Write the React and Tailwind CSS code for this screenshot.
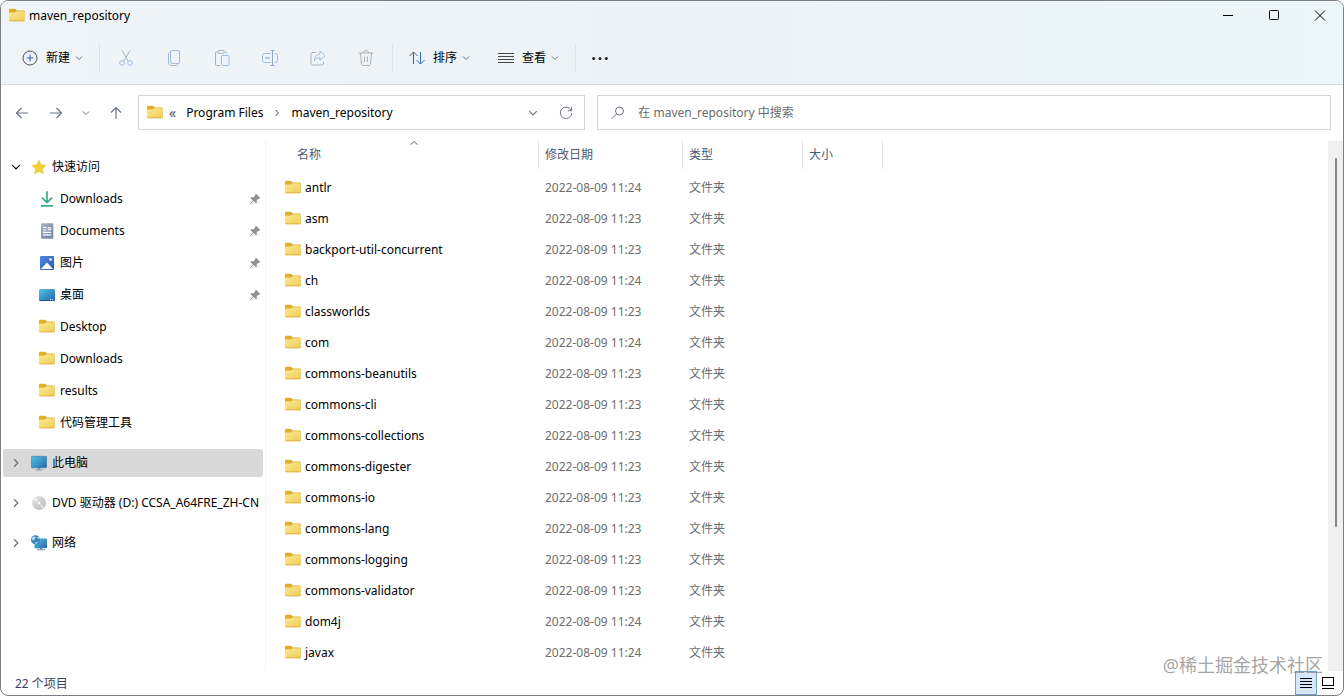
const font = 'font-["Noto_Sans","Noto_Sans_CJK_SC",sans-serif]'

const quickItems = [
  { name: 'Downloads', Icon: DownloadIcon, pinned: true },
  { name: 'Documents', Icon: DocumentIcon, pinned: true },
  { name: '图片', Icon: PictureIcon, pinned: true },
  { name: '桌面', Icon: DesktopIcon, pinned: true },
  { name: 'Desktop', Icon: FolderIcon },
  { name: 'Downloads', Icon: FolderIcon },
  { name: 'results', Icon: FolderIcon },
  { name: '代码管理工具', Icon: FolderIcon },
]

const files = [
  ['antlr', '11:24'],
  ['asm', '11:23'],
  ['backport-util-concurrent', '11:23'],
  ['ch', '11:24'],
  ['classworlds', '11:23'],
  ['com', '11:24'],
  ['commons-beanutils', '11:23'],
  ['commons-cli', '11:23'],
  ['commons-collections', '11:23'],
  ['commons-digester', '11:23'],
  ['commons-io', '11:23'],
  ['commons-lang', '11:23'],
  ['commons-logging', '11:23'],
  ['commons-validator', '11:23'],
  ['dom4j', '11:24'],
  ['javax', '11:24'],
]

// Gradients shared by every icon on the page
const IconDefs = () => (
  <svg width="0" height="0" className="absolute" aria-hidden>
    <defs>
      <linearGradient id="folder" x1="0" y1="0" x2="1" y2="1">
        <stop offset="0" stopColor="#fbe79a" />
        <stop offset="1" stopColor="#efce52" />
      </linearGradient>
      <linearGradient id="screen" x1="0" y1="0" x2="1" y2="1">
        <stop offset="0" stopColor="#55c3dc" />
        <stop offset="1" stopColor="#2467b4" />
      </linearGradient>
      <linearGradient id="paper" x1="0" y1="0" x2="1" y2="1">
        <stop offset="0" stopColor="#a9b4c8" />
        <stop offset="1" stopColor="#6d7f9c" />
      </linearGradient>
      <linearGradient id="photo" x1="0" y1="0" x2="1" y2="1">
        <stop offset="0" stopColor="#4f87d8" />
        <stop offset="1" stopColor="#2a5fbd" />
      </linearGradient>
      <linearGradient id="disc" x1="0" y1="0" x2="1" y2="1">
        <stop offset="0" stopColor="#e9e9e9" />
        <stop offset="1" stopColor="#b5b7b8" />
      </linearGradient>
    </defs>
  </svg>
)

const Svg = ({ size = 16, className = '', children, ...rest }) => (
  <svg
    width={size}
    height={size}
    viewBox={`0 0 ${size} ${size}`}
    fill="none"
    className={`shrink-0 ${className}`}
    aria-hidden
    {...rest}
  >
    {children}
  </svg>
)

function FolderIcon() {
  return (
    <Svg>
      <path d="M0 2a1.300 1.300 0 0 1 1.300-1.300h4.200c.5 0 .9.200 1.200.5L8 2.500h6.700A1.300 1.300 0 0 1 16 3.800V6H0z" fill="#e0ae2c" />
      <path d="M0 5.300c0-.5.400-.9.900-.9h4.700c.4 0 .8-.1 1.100-.4l.9-.8h7.200c.7 0 1.200.5 1.200 1.200v7.700c0 .7-.5 1.200-1.200 1.200H1.200c-.7 0-1.200-.5-1.200-1.200z" fill="url(#folder)" />
      <path d="M.3 12.800h15.400" stroke="#d9a93a" strokeWidth=".8" />
    </Svg>
  )
}

function DownloadIcon() {
  return (
    <Svg stroke="#3fa987" strokeWidth="1.700">
      <path d="M8 .3v11M3 6.600l5 5 5-5M2 14.900h12" />
    </Svg>
  )
}

function DocumentIcon() {
  return (
    <Svg>
      <rect x="2" y=".3" width="12.300" height="15.500" rx="1" fill="url(#paper)" />
      <path d="M4 4.500h3.500M4 7h3.500M4 9.400h8.300M4 11.800h8.300" stroke="#fff" strokeWidth="1.200" />
      <path d="M9.200 4.700h2.600v2.200H9.200z" stroke="#fff" strokeWidth="1" />
    </Svg>
  )
}

function PictureIcon() {
  return (
    <Svg>
      <rect x="1" y="1" width="14" height="14" rx="1" fill="url(#photo)" />
      <path d="M2 14l5.300-5.800c.4-.4 1-.4 1.400 0L14 14z" fill="#fff" />
      <circle cx="11.500" cy="4.500" r="1.300" fill="#fff" />
    </Svg>
  )
}

function DesktopIcon() {
  return (
    <Svg>
      <rect y="2" width="16" height="12" rx="1.300" fill="url(#screen)" />
      <path d="M.5 13.500h15" stroke="#1d5187" />
      <path d="M11 12.800h1M13 12.800h1" stroke="#fff" />
    </Svg>
  )
}

function ComputerIcon() {
  return (
    <Svg>
      <path d="M6.700 12h2.600v2.500H6.700z" fill="#7f97a8" />
      <path d="M4.500 15h7" stroke="#8699a6" />
      <rect x=".3" y="1.300" width="15.400" height="11.500" rx="1" fill="url(#screen)" stroke="#2e6f9f" strokeWidth=".5" />
    </Svg>
  )
}

function DiscIcon() {
  return (
    <Svg>
      <circle cx="8" cy="8" r="7" fill="url(#disc)" />
      <path d="M8 8 4.500 2 2 4.500zM8 8l5.500 4-2 2z" fill="#fff" opacity=".5" />
      <circle cx="8" cy="8" r="1.800" fill="#f7f7f7" stroke="#c9c9c9" strokeWidth=".5" />
    </Svg>
  )
}

function NetworkIcon() {
  return (
    <Svg>
      <path d="M9 12.500h2v2H9zM6 14.300h8v1H6z" fill="#7896ab" />
      <rect x="3.500" y="3.500" width="12.500" height="9.700" rx=".8" fill="url(#screen)" />
      <circle cx="4.500" cy="4.800" r="4.500" fill="#3d84bd" />
      <path d="M.8 3.200C2 1.200 4 1 4.500 2.200S3 4.500 1.800 5.800zM6.500 1.500c-1 1.200.3 2.500 2.200 2.500-.2-1-1-2-2.200-2.500zM4 8.800c-.3-1.500 1.200-2.300 3.200-1.700C6.500 8.200 5.400 8.900 4 8.800z" fill="#b9dcee" />
    </Svg>
  )
}

function StarIcon() {
  return (
    <Svg>
      <path
        d="M8 1.300l2.100 4.500 4.900.6-3.600 3.400.9 4.900L8 12.300l-4.300 2.400.9-4.900L1 6.400l4.900-.6z"
        fill="#f3ce35"
        stroke="#eec12f"
        strokeWidth=".7"
        strokeLinejoin="round"
      />
    </Svg>
  )
}

const PinIcon = () => (
  <Svg size={12}>
    <path d="M7 .7l4.300 4.300-.9.700-.7-.1-2 2 .1 2.200-.8.700-2.400-2.400L1 11.400l-.5-.5L3.700 7.500 1.300 5l.7-.8 2.300.2 2-2-.1-.8z" fill="#8e9294" />
  </Svg>
)

const Chevron = ({ size = 8, dir = 'down', className = '' }) => (
  <svg
    width={size}
    height={size}
    viewBox="0 0 8 8"
    fill="none"
    stroke="currentColor"
    className={`shrink-0 ${className}`}
    aria-hidden
  >
    <path d={{ down: 'M1 2.500 4 5.500l3-3', up: 'M.7 5.700 4 2.300l3.300 3.400', right: 'M2.500 1 5.500 4l-3 3' }[dir]} />
  </svg>
)

const tools = [
  {
    label: '剪切',
    icon: (
      <>
        <path d="M4 .5l6.500 11M12 .5l-6.500 11" stroke="#a9b2ba" />
        <circle cx="4" cy="13" r="2.300" />
        <circle cx="12" cy="13" r="2.300" />
      </>
    ),
  },
  {
    label: '复制',
    icon: (
      <>
        <path d="M3.500 2.500c-.7.300-1 .8-1 1.500v8.500c0 1.700 1 3 2.700 3h5c.8 0 1.300-.3 1.600-1" stroke="#a9b7c6" />
        <rect x="4.500" y=".5" width="9" height="13" rx="1.500" />
      </>
    ),
  },
  {
    label: '粘贴',
    icon: (
      <>
        <path d="M6 15.500H2.500c-.6 0-1-.4-1-1V3c0-.6.400-1 1-1H4M10 2h1.500c.6 0 1 .4 1 1v.500" stroke="#a9b2ba" />
        <rect x="4" y=".5" width="6" height="2.800" rx="1" stroke="#a9b2ba" />
        <rect x="7.500" y="5.500" width="7.500" height="10" rx="1" />
      </>
    ),
  },
  {
    label: '重命名',
    icon: (
      <>
        <path d="M8.500 3.500h-6a2 2 0 0 0-2 2v5c0 1.100.9 2 2 2h6M12.500 3.500h1a2 2 0 0 1 2 2v5a2 2 0 0 1-2 2h-1" />
        <path d="M8.500.5h4M8.500 15.500h4M10.500.5v15" stroke="#8fa8c8" />
        <path d="M3 8h5" strokeWidth="1.400" />
      </>
    ),
  },
  {
    label: '共享',
    icon: (
      <>
        <path d="M6 2.500H3a2 2 0 0 0-2 2V13c0 1.100.9 2 2 2h8.500a2 2 0 0 0 2-2v-1.500" stroke="#a9b2ba" />
        <path d="M10 1l5 4.700-5 4.600V7.700c-2.500 0-4.300.8-5.700 3.100.2-3.700 2.200-6.700 5.700-7z" strokeLinejoin="round" />
      </>
    ),
  },
  {
    label: '删除',
    icon: (
      <g stroke="#a9b2ba">
        <path d="M.8 3h14.400M5.500 3c0-1.500 1-2.500 2.500-2.500s2.500 1 2.500 2.500M2.500 3l1 11c.1.900.7 1.500 1.500 1.500h6c.8 0 1.400-.6 1.500-1.500l1-11" />
        <path d="M6.500 6.500V12M9.500 6.500V12" />
      </g>
    ),
  },
]

const Divider = () => <span className="h-7 w-px bg-[#dde3e6]" />

const MenuButton = ({ icon, label, className = '' }) => (
  <button type="button" className={`flex items-center text-black ${className}`}>
    {icon}
    <span className="ml-2">{label}</span>
    <Chevron className="ml-[5px] text-gray-500" />
  </button>
)

const TitleBar = () => (
  <header className="flex h-[30px] items-center justify-between pl-2">
    <div className="flex items-center gap-1">
      <FolderIcon />
      <h1 className="text-black">maven_repository</h1>
    </div>
    <div className="flex h-full text-black">
      <button type="button" aria-label="最小化" className="flex w-[46px] items-center justify-center">
        <Svg size={12} stroke="currentColor"><path d="M1 5.500h10" /></Svg>
      </button>
      <button type="button" aria-label="最大化" className="flex w-[46px] items-center justify-center">
        <Svg size={12} stroke="currentColor"><rect x="1.500" y=".5" width="9" height="9" rx="1" /></Svg>
      </button>
      <button type="button" aria-label="关闭" className="flex w-[46px] items-center justify-center">
        <Svg size={12} stroke="currentColor"><path d="M1 .5l10 10M11 .5l-10 10" /></Svg>
      </button>
    </div>
  </header>
)

const Toolbar = () => (
  <div className="flex h-[53px] items-center pl-[21px]">
    <MenuButton
      label="新建"
      className="mr-4"
      icon={
        <Svg>
          <circle cx="8" cy="8" r="7" stroke="#4b5156" />
          <path d="M8 4.500v7M4.500 8h7" stroke="#3c63c8" />
        </Svg>
      }
    />
    <Divider />
    <div className="mx-4 flex gap-7">
      {tools.map(({ label, icon }) => (
        <button key={label} type="button" aria-label={label} disabled className="flex w-5 justify-center">
          <Svg stroke="#9dbbe0">{icon}</Svg>
        </button>
      ))}
    </div>
    <Divider />
    <MenuButton
      label="排序"
      className="ml-4"
      icon={
        <Svg>
          <path d="M4.500 14V2M.5 6l4-4 4 4" stroke="#555b60" />
          <path d="M11.500 2v12M7.500 10l4 4 4-4" stroke="#2f6cc9" />
        </Svg>
      }
    />
    <MenuButton
      label="查看"
      className="mr-4 ml-7"
      icon={<Svg stroke="#44494d"><path d="M0 3.500h16M0 6.500h16M0 9.500h16M0 12.500h16" /></Svg>}
    />
    <Divider />
    <button type="button" aria-label="更多" className="ml-4">
      <Svg fill="#222">
        <circle cx="1.700" cy="8.500" r="1.500" />
        <circle cx="8" cy="8.500" r="1.500" />
        <circle cx="14.300" cy="8.500" r="1.500" />
      </Svg>
    </button>
  </div>
)

const AddressRow = () => (
  <div className="flex h-[55px] shrink-0 items-center">
    <nav className="mr-3.5 flex items-center gap-[18px] pl-[13px] text-gray-500">
      <button type="button" aria-label="后退">
        <Svg stroke="currentColor" strokeWidth="1.200"><path d="M14 8H2.500M7.500 3l-5 5 5 5" /></Svg>
      </button>
      <button type="button" aria-label="前进">
        <Svg stroke="currentColor" strokeWidth="1.200"><path d="M2 8h11.500M8.500 3l5 5-5 5" /></Svg>
      </button>
      <button type="button" aria-label="最近浏览的位置">
        <Chevron />
      </button>
      <button type="button" aria-label="向上">
        <Svg stroke="currentColor" strokeWidth="1.200"><path d="M8 14V2.500M3 7.500l5-5 5 5" /></Svg>
      </button>
    </nav>
    <div className="flex h-[35px] w-1/3 shrink-0 items-center border border-[#d5d5d5] pl-2 text-black">
      <FolderIcon />
      <span className="ml-1.5 text-sm leading-4 text-gray-600">«</span>
      <a href="#program-files" className="ml-2.5">Program Files</a>
      <Chevron dir="right" className="mx-2.5 text-gray-700" />
      <a href="#maven_repository">maven_repository</a>
      <button type="button" aria-label="以前的位置" className="ml-auto text-gray-500">
        <Chevron size={10} />
      </button>
      <button type="button" aria-label="刷新" className="mr-2.5 ml-5 text-gray-500">
        <Svg stroke="currentColor"><path d="M13.200 5.500A5.700 5.700 0 1 0 13.700 8M13.500 2v3.700H9.800" /></Svg>
      </button>
    </div>
    <label className="mx-3 flex h-[35px] flex-1 items-center gap-3 border border-[#d5d5d5] pl-3 text-gray-500">
      <Svg stroke="currentColor"><circle cx="9.500" cy="6" r="4" /><path d="M6.500 9 2 13.500" /></Svg>
      <input
        type="text"
        aria-label="搜索"
        placeholder="在 maven_repository 中搜索"
        className="w-full bg-transparent outline-none placeholder:text-[#6b6b6b]"
      />
    </label>
  </div>
)

const RootItem = ({ label, Icon, open, selected }) => (
  <button
    type="button"
    className={`flex h-7 w-full items-center overflow-hidden rounded-xs pl-2 whitespace-nowrap ${selected ? 'bg-[#d9d9d9]' : ''}`}
  >
    <Chevron size={10} dir={open ? 'down' : 'right'} className={open ? 'text-black' : 'text-gray-500'} />
    <span className="mr-[5px] ml-2.5">
      <Icon />
    </span>
    {label}
  </button>
)

const Sidebar = () => (
  <aside className="flex w-[265px] shrink-0 flex-col gap-3 border-r border-[#f3f3f3] px-0.5 pt-[13px] text-black">
    <div className="flex flex-col gap-1">
      <RootItem label="快速访问" Icon={StarIcon} open />
      {quickItems.map(({ name, Icon, pinned }, i) => (
        <a key={i} href={`#quick-${i}`} className="flex h-7 items-center gap-[5px] pr-0.5 pl-9">
          <Icon />
          <span className="flex-1">{name}</span>
          {pinned && <PinIcon />}
        </a>
      ))}
    </div>
    <RootItem label="此电脑" Icon={ComputerIcon} selected />
    <RootItem label="DVD 驱动器 (D:) CCSA_A64FRE_ZH-CN" Icon={DiscIcon} />
    <RootItem label="网络" Icon={NetworkIcon} />
  </aside>
)

const FileTable = () => (
  <main className="min-w-0 flex-1 overflow-hidden">
    <table className="w-full table-fixed text-left text-[#6d6d6d]">
      <colgroup>
        <col className="w-[273px]" />
        <col className="w-36" />
        <col className="w-30" />
        <col className="w-20" />
        <col />
      </colgroup>
      <thead className="text-[#4c5a78]">
        <tr className="h-8">
          {['名称', '修改日期', '类型', '大小'].map((title, i) => (
            <th key={title} className="p-0 pt-px pb-[3px] font-normal">
              <button
                type="button"
                className={`relative flex h-7 w-full items-center border-r border-[#e3e3e3] ${i === 0 ? 'pl-[31px]' : 'pl-1.5'}`}
              >
                {title}
                {i === 0 && <Chevron dir="up" className="absolute -top-0.5 left-36 text-gray-600" />}
              </button>
            </th>
          ))}
          <th aria-hidden />
        </tr>
      </thead>
      <tbody>
        {files.map(([name, time]) => (
          <tr key={name} className="h-[31px]">
            <td className="p-0 pl-[19px] text-black">
              <span className="flex items-center gap-1">
                <FolderIcon />
                {name}
              </span>
            </td>
            <td className="p-0 pl-1.5">2022-08-09 {time}</td>
            <td className="p-0 pl-1.5">文件夹</td>
            <td />
            <td />
          </tr>
        ))}
      </tbody>
    </table>
  </main>
)

const StatusBar = () => (
  <footer className="flex h-6 shrink-0 items-center pl-3.5 text-[#3b4166]">
    <span className="flex-1 pt-0.5">22 个项目</span>
    <button
      type="button"
      aria-label="详细信息"
      aria-pressed="true"
      className="flex h-6 w-[22px] items-center justify-center border border-[#6f9fd0] bg-[#d6e8f8]"
    >
      <Svg size={12} stroke="#000"><path d="M0 1.500h12M0 4.500h12M0 7.500h12M0 10.500h12" /></Svg>
    </button>
    <button type="button" aria-label="大图标" className="mr-[9px] ml-[5px] flex h-6 items-center justify-center">
      <Svg size={12} stroke="#000"><rect x=".5" y=".5" width="11" height="8" /><path d="M0 11.500h12" /></Svg>
    </button>
  </footer>
)

export default function App() {
  return (
    <div
      className={`relative flex h-screen flex-col overflow-hidden rounded-lg border border-[#7d7f81] bg-white text-xs ${font}`}
    >
      <IconDefs />
      <div className="shrink-0 border-b border-[#d9dddf] bg-linear-to-r from-[#eff4f8] via-[#ecf3f6] to-[#ecf5fa]">
        <TitleBar />
        <Toolbar />
      </div>
      <AddressRow />
      <div className="flex min-h-0 flex-1">
        <Sidebar />
        <FileTable />
        <div className="mt-px flex w-[15px] shrink-0 justify-center bg-[#f0f0f0] pt-[17px]">
          <div className="h-[72%] w-0.5 rounded-full bg-[#858585]" />
        </div>
      </div>
      <StatusBar />
      <span className="pointer-events-none absolute right-5 bottom-4 text-lg leading-7 text-[#8d8d8d]/80">
        @稀土掘金技术社区
      </span>
    </div>
  )
}
